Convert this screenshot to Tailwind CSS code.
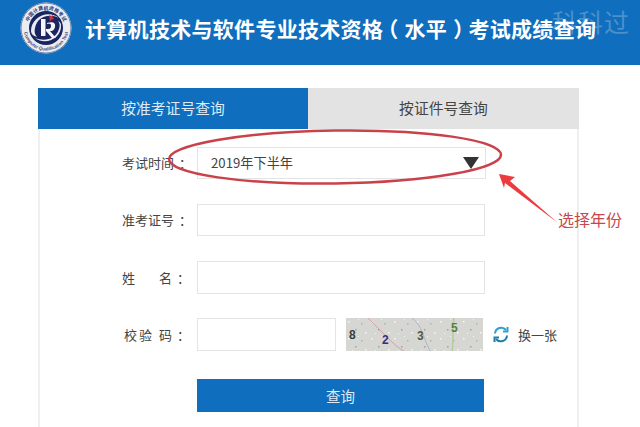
<!DOCTYPE html>
<html lang="zh">
<head>
<meta charset="utf-8">
<script src="https://cdn.jsdelivr.net/npm/@tailwindcss/browser@4"></script>
</head>
<body class="relative w-[640px] h-[427px] overflow-hidden bg-white font-['Noto_Sans_CJK_SC','Noto_Sans',sans-serif] text-[#444]">
<header class="h-[65px] bg-[#0f6ebd] flex items-center pl-[20px]">
  <svg class="w-[52px] h-[52px] shrink-0 -mt-[9px]" viewBox="0 0 52 52">
    <defs>
      <path id="arcTop" d="M7.500 26a18.500 18.500 0 0 1 37 0"/>
      <path id="arcBottom" d="M3.500 26a22.500 22.500 0 0 0 45 0"/>
    </defs>
    <circle cx="26" cy="26" r="25.500" fill="#e9edf3"/>
    <circle cx="26" cy="26" r="25" fill="none" stroke="#6f83a8" stroke-width="1"/>
    <text font-size="5" font-weight="700" fill="#2c3a70" font-family="'Noto Sans CJK SC',sans-serif" text-anchor="middle"><textPath href="#arcTop" startOffset="50%">中国计算机资格考试</textPath></text>
    <text font-size="4.600" font-weight="700" fill="#3d4a78" font-family="'Liberation Sans',sans-serif" text-anchor="middle"><textPath href="#arcBottom" startOffset="50%">Computer Qualification Test</textPath></text>
    <circle cx="26" cy="26" r="17" fill="#1a2560"/>
    <path d="M11 29C11 15 28 7 39 16c-9-5-22-2-24 10-1 4 0 7 2 9-4-1-6-3-6-6z" fill="#e8ebf3"/>
    <path d="M41 23c1 13-15 21-26 13 10 4 21 1 24-9 1-3 1-6-1-8 2 1 3 2 3 4z" fill="#e8ebf3"/>
    <path d="M21 17h4.500v17H21z" fill="#f5f5fa"/>
    <path d="M27 21c6-2 9 0 8 4s-3 4-5 4l6 7h-4l-6-7v-2c3 0 5 0 5-3s-2-2-4-2z" fill="#f5f5fa"/>
    <path d="M29 13l2 1.500 2-2-.5 3 2 1.500-3 .5-1.500 2-.5-3z" fill="#d8313a"/>
  </svg>
  <h1 class="ml-[13px] -mt-[8px] text-[21px] font-bold leading-none text-white whitespace-nowrap tracking-[0.3px]">计算机技术与软件专业技术资格<span class="relative -left-[6px]">（</span>水平<span class="relative left-[6px]">）</span>考试成绩查询</h1>
</header>

<main class="w-[541px] h-[339px] mt-[23px] ml-[38px] border-x-2 border-[#efefef]">
  <div class="flex -mx-[2px] h-[41px] text-[14.800px]">
    <div class="w-[270px] bg-[#0f6ebd] text-[#dfeaf6] flex items-center justify-center">按准考证号查询</div>
    <div class="w-[271px] bg-[#e3e3e3] text-[#444] flex items-center justify-center">按证件号查询</div>
  </div>

  <form class="pl-[82px] pt-[18px] text-[13px]">
    <div class="flex items-center h-[32px]">
      <label class="w-[75px] whitespace-nowrap">考试时间<span class="relative left-[5px]">：</span></label>
      <div class="w-[289px] h-[32px] border border-[#e4e4e4] flex items-center justify-between pl-[13px] pr-[6px]">
        <span class="text-[13.200px] text-[#444]">2019年下半年</span>
        <svg class="w-[16px] h-[12px]" viewBox="0 0 16 12"><path d="M0 0h16L8 12z" fill="#333"/></svg>
      </div>
    </div>
    <div class="flex items-center h-[32px] mt-[25px]">
      <label class="w-[75px] whitespace-nowrap">准考证号<span class="relative left-[5px]">：</span></label>
      <div class="w-[288px] h-[32px] border border-[#e4e4e4]"></div>
    </div>
    <div class="flex items-center h-[33px] mt-[25px]">
      <label class="w-[75px] flex whitespace-nowrap"><span>姓</span><span class="ml-[24px]">名</span><span class="ml-[5px]">：</span></label>
      <div class="w-[288px] h-[33px] border border-[#e4e4e4]"></div>
    </div>
    <div class="flex items-center h-[33px] mt-[24px]">
      <label class="w-[75px] pl-[2px] tracking-[2px] whitespace-nowrap">校验 码<span class="relative left-[3px]">：</span></label>
      <div class="w-[139px] h-[33px] border border-[#e4e4e4]"></div>
      <div class="ml-[10px] w-[137px] h-[33px] bg-[#d6d7d3] relative font-['Liberation_Sans',sans-serif] text-[12px] font-bold overflow-hidden">
        <svg class="absolute inset-0" width="137" height="33" viewBox="0 0 137 33">
          <defs>
            <pattern id="speck" width="23" height="17" patternUnits="userSpaceOnUse">
              <rect x="2" y="3" width="1.500" height="1.500" fill="#fff" opacity=".8"/>
              <rect x="9" y="11" width="1.500" height="1.500" fill="#8b8d88" opacity=".7"/>
              <rect x="15" y="5" width="1.500" height="1.500" fill="#8b8d88" opacity=".5"/>
              <rect x="19" y="14" width="1.500" height="1.500" fill="#fff" opacity=".8"/>
              <rect x="6" y="15" width="1" height="1" fill="#fff" opacity=".7"/>
              <rect x="12" y="1" width="1" height="1" fill="#fff" opacity=".7"/>
            </pattern>
          </defs>
          <rect width="137" height="33" fill="url(#speck)"/>
          <path d="M22 0c8 8 14 14 22 22 4 4 8 8 14 11" fill="none" stroke="#cfa5a5" stroke-width="1"/>
          <path d="M66 0c8 6 10 14 14 24l4 9" fill="none" stroke="#aeb3cd" stroke-width="1"/>
          <path d="M108 0c-2 10 0 22-2 33" fill="none" stroke="#b4cc9c" stroke-width="1.500"/>
        </svg>
        <span class="absolute left-[3px] top-[8px] text-[#3a3a40]">8</span>
        <span class="absolute left-[36px] top-[13px] text-[#3a2f78]">2</span>
        <span class="absolute left-[71px] top-[9px] text-[#54583a]">3</span>
        <span class="absolute left-[105px] top-[1px] text-[#55803a]">5</span>
      </div>
      <svg class="ml-[10px] w-[16px] h-[17px]" viewBox="0 0 16 17" fill="none" stroke-width="2">
        <path d="M2 7.500A6.200 6.200 0 0 1 13 4" stroke="#2f9fd0"/><path d="M14.500 1v4.500H10" stroke="#2f9fd0"/>
        <path d="M14 9.500A6.200 6.200 0 0 1 3 13" stroke="#1f7fa8"/><path d="M1.500 16v-4.500H6" stroke="#1f7fa8"/>
      </svg>
      <span class="ml-[9px] text-[13px] whitespace-nowrap">换一张</span>
    </div>
    <button type="button" class="block mt-[28px] ml-[75px] w-[287px] h-[33px] bg-[#0f6ebd] text-[#dfeaf6] text-[14.500px]">查询</button>
  </form>
</main>

<svg class="absolute left-0 top-0 pointer-events-none" width="640" height="427" viewBox="0 0 640 427">
  <ellipse cx="335" cy="157" rx="166" ry="26.500" transform="rotate(-0.8 335 157)" fill="none" stroke="#c9424a" stroke-width="2.500"/>
  <path d="M499 174L515 177L510 181L558 223L505 183L504 188Z" fill="#ec3b3f"/>
</svg>
<span class="absolute left-[558px] top-[209px] text-[16px] leading-[20px] text-[#c8474c] whitespace-nowrap">选择年份</span>
<span class="absolute left-[552px] top-[5px] text-[25px] leading-[32px] tracking-[1px] text-white/25 whitespace-nowrap">科科过</span>
</body>
</html>
